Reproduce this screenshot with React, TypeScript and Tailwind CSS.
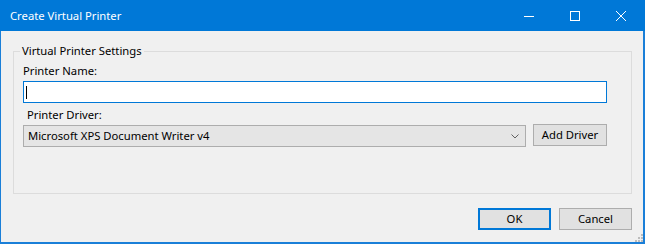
export default function App() {
  return (
    <div className="flex h-[244px] w-[645px] flex-col bg-[#f0f0f0] font-['Noto_Sans',sans-serif] text-[11.25px] leading-[16px] text-black">
      {/* Title bar */}
      <div className="flex h-[31px] shrink-0 items-center bg-[#0078d7] pr-[1px] text-white">
        <span className="ml-[10px] flex-1">Create Virtual Printer</span>
        <div className="flex h-full">
          <div className="flex w-[46px] items-center justify-center">
            <svg width="10" height="10" viewBox="0 0 10 10">
              <path d="M0 5.5h10" stroke="white" strokeWidth="1" />
            </svg>
          </div>
          <div className="flex w-[46px] items-center justify-center">
            <svg width="10" height="10" viewBox="0 0 10 10">
              <rect x="0.5" y="0.5" width="9" height="9" fill="none" stroke="white" strokeWidth="1" />
            </svg>
          </div>
          <div className="flex w-[46px] items-center justify-center">
            <svg width="10" height="10" viewBox="0 0 10 10">
              <path d="M0 0L10 10M10 0L0 10" stroke="white" strokeWidth="1" />
            </svg>
          </div>
        </div>
      </div>

      {/* Body */}
      <div className="relative flex flex-1 flex-col border-b-2 border-l border-r-2 border-[#1a7fd8] pl-[12px] pr-[11px] pt-[12px]">
        <fieldset className="h-[151px] border border-[#dcdcdc] pl-[9px] pr-[24px]">
          <legend className="-ml-[3px] px-[2px]">Virtual Printer Settings</legend>
          <div className="mt-[4px]">Printer Name:</div>
          <div className="mt-[2px] flex h-[22px] items-center border border-[#0078d7] bg-white pl-[2px]">
            <span className="h-[13px] w-px bg-black" />
          </div>
          <div className="ml-[4px] mt-[4px]">Printer Driver:</div>
          <div className="mt-[2px] flex gap-[7px]">
            <div className="flex h-[22px] w-[503px] items-center border border-[#adadad] bg-[#e5e5e5] pl-[4px] pr-[6px]">
              <span className="flex-1">Microsoft XPS Document Writer v4</span>
              <svg width="8" height="5" viewBox="0 0 8 5">
                <path d="M0.5 0.5L4 4L7.5 0.5" fill="none" stroke="#606060" strokeWidth="1" />
              </svg>
            </div>
            <button className="-mt-[1px] h-[22px] w-[74px] border border-[#adadad] bg-[#e1e1e1]">
              Add Driver
            </button>
          </div>
        </fieldset>

        <div className="mt-[14px] flex justify-end gap-[8px]">
          <button className="h-[22px] w-[73px] border-2 border-[#0078d7] bg-[#e1e1e1]">OK</button>
          <button className="h-[22px] w-[73px] border border-[#adadad] bg-[#e1e1e1]">Cancel</button>
        </div>

        {/* Resize grip */}
        <svg className="absolute bottom-[0px] right-[0px]" width="8" height="8" viewBox="0 0 8 8">
          <rect x="6" y="0" width="2" height="2" fill="#bcbcbc" />
          <rect x="3" y="3" width="2" height="2" fill="#bcbcbc" />
          <rect x="6" y="3" width="2" height="2" fill="#bcbcbc" />
          <rect x="0" y="6" width="2" height="2" fill="#bcbcbc" />
          <rect x="3" y="6" width="2" height="2" fill="#bcbcbc" />
          <rect x="6" y="6" width="2" height="2" fill="#bcbcbc" />
        </svg>
      </div>
    </div>
  );
}
